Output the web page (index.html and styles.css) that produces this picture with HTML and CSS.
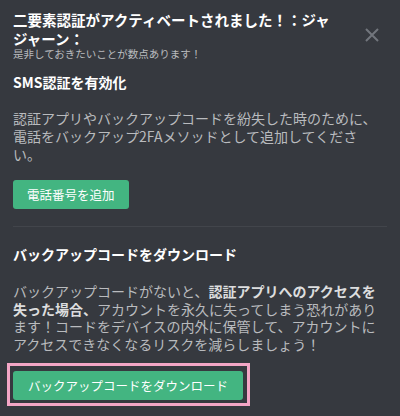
FILE: index.html
```html
<!DOCTYPE html>
<html lang="ja">
<head>
    <meta charset="UTF-8">
    <title>二要素認証</title>
    <link rel="stylesheet" href="styles.css">
</head>
<body>
    <div class="modal">
        <div class="header">
            <div class="title-block">
                <h2 class="title">二要素認証がアクティベートされました！：ジャジャーン：</h2>
                <p class="subtitle">是非しておきたいことが数点あります！</p>
            </div>
            <button class="close" aria-label="閉じる">
                <svg width="14" height="14" viewBox="0 0 14 14">
                    <path d="M1 1L13 13M13 1L1 13" stroke="#72767d" stroke-width="2" fill="none"/>
                </svg>
            </button>
        </div>

        <div class="section">
            <h3>SMS認証を有効化</h3>
            <p class="text">認証アプリやバックアップコードを紛失した時のために、電話をバックアップ2FAメソッドとして追加してください。</p>
            <button class="btn">電話番号を追加</button>
        </div>

        <div class="divider"></div>

        <div class="section">
            <h3>バックアップコードをダウンロード</h3>
            <p class="text text-tight">バックアップコードがないと、<strong>認証アプリへのアクセスを失った場合、</strong>アカウントを永久に失ってしまう恐れがあります！コードをデバイスの内外に保管して、アカウントにアクセスできなくなるリスクを減らしましょう！</p>
            <div class="highlight">
                <button class="btn">バックアップコードをダウンロード</button>
            </div>
        </div>
    </div>
</body>
</html>
```

FILE: styles.css
```css
body {
    margin: 0;
    background: #36393f;
    font-family: 'Noto Sans CJK JP', 'Noto Sans', sans-serif;
    color: #b9bbbe;
}

.modal {
    padding: 10px 13px;
}

.header {
    display: flex;
    gap: 14px;
}

.title-block {
    flex: 1;
}

.title {
    margin: 0;
    font-size: 14.5px;
    line-height: 19px;
    font-weight: bold;
    color: #fff;
}

.subtitle {
    margin: 0;
    font-size: 10.5px;
    line-height: 12px;
    color: #b9bbbe;
}

.close {
    width: 30px;
    background: none;
    border: none;
    padding: 0;
    align-self: center;
    display: flex;
    justify-content: center;
    cursor: pointer;
}

.section h3 {
    margin: 13px 0 0;
    font-size: 14px;
    line-height: 18px;
    font-weight: bold;
    color: #fff;
}

.text {
    max-width: 368px;
    margin: 18px 0 0;
    font-size: 14px;
    line-height: 18px;
}

.text-tight {
    margin-top: 20px;
    line-height: 17.5px;
}

.text strong {
    color: #dcddde;
}

.btn {
    display: block;
    margin-top: 17px;
    height: 29px;
    padding: 0 14px;
    background: #43b581;
    color: #fff;
    border: none;
    border-radius: 3px;
    font-family: inherit;
    font-size: 12.5px;
    cursor: pointer;
}

.divider {
    height: 1px;
    background: #42454b;
    margin-top: 17px;
}

.divider + .section h3 {
    margin-top: 18px;
}

.highlight {
    display: inline-block;
    margin: 10px 0 0 -6px;
    padding: 5px 4px 3px 3px;
    border: 3px solid #f4a6c6;
}

.highlight .btn {
    margin-top: 0;
    padding: 0 15px;
}
```
